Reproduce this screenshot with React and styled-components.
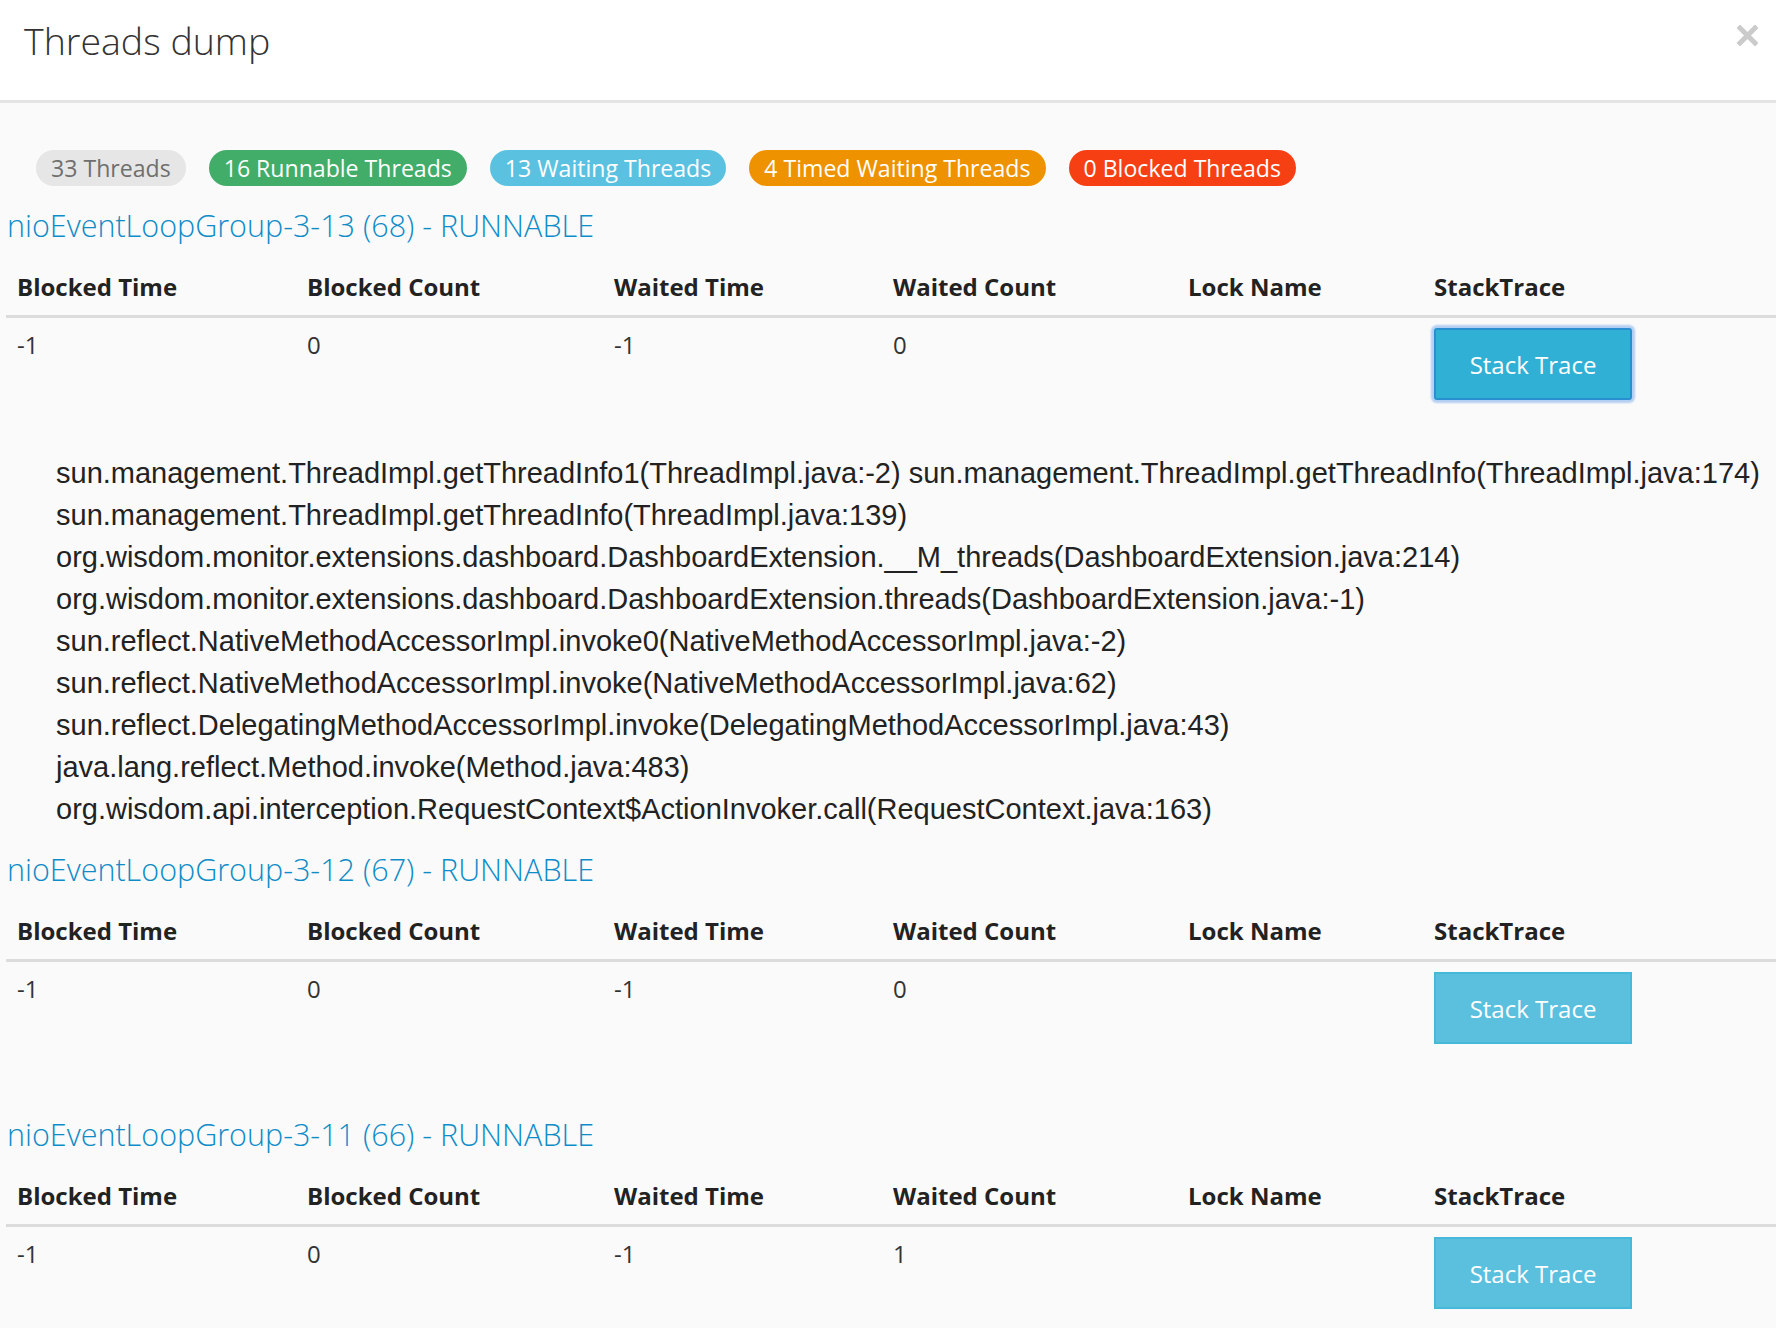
import React, { useState } from 'react'
import styled, { createGlobalStyle, css } from 'styled-components'

const GlobalStyle = createGlobalStyle`
  html, body {
    margin: 0;
    padding: 0;
    background: #fafafa;
    font-family: "Open Sans", "Liberation Sans", sans-serif;
    color: #333;
  }
  * { box-sizing: border-box; }
`

const Header = styled.div`
  height: 103px;
  background: #fff;
  border-bottom: 3px solid #e4e4e4;
  padding: 22px 18px 0 24px;
  display: flex;
  justify-content: space-between;
  align-items: flex-start;
`

const Title = styled.h1`
  margin: 0;
  font-size: 37.5px;
  font-weight: 300;
  line-height: 38px;
  color: #333;
`

const Close = styled.button`
  border: 0;
  background: none;
  padding: 0;
  margin-top: 3px;
  width: 21px;
  height: 21px;
  cursor: pointer;
  display: flex;
`

const Body = styled.div`
  padding: 47px 0 0 6px;
`

const Badges = styled.div`
  display: flex;
  gap: 23px;
  margin-left: 30px;
`

const badgeColors = {
  all: { bg: '#e6e6e6', fg: '#6f6f6f' },
  runnable: { bg: '#41ad69', fg: '#fff' },
  waiting: { bg: '#5bc1e1', fg: '#fff' },
  timed: { bg: '#ee9200', fg: '#fff' },
  blocked: { bg: '#f73f14', fg: '#fff' },
}

const Badge = styled.span`
  display: inline-block;
  height: 36px;
  line-height: 36px;
  padding: 0 15px;
  border-radius: 18px;
  font-size: 23.1px;
  background: ${(p) => badgeColors[p.$kind].bg};
  color: ${(p) => badgeColors[p.$kind].fg};
`

const ThreadName = styled.a`
  display: block;
  margin: 18px 0 12px 1px;
  font-size: 30.5px;
  font-weight: 300;
  line-height: 43px;
  color: #0e8cc8;
  text-decoration: none;
`

const Table = styled.table`
  width: 100%;
  border-collapse: collapse;
  table-layout: fixed;
  margin-bottom: ${(p) => (p.$open ? '42px' : '59px')};
`

const Th = styled.th`
  text-align: left;
  padding: 11px;
  font-size: 24px;
  line-height: 34px;
  font-weight: 700;
  color: #222;
  border-bottom: 3px solid #dcdcdc;
`

const Td = styled.td`
  padding: 10px 11px;
  font-size: 24px;
  line-height: 34px;
  color: #333;
  vertical-align: top;
`

const TraceButton = styled.button`
  width: 198px;
  height: 72px;
  border: 2px solid #46b8da;
  background: #5bc0de;
  color: #fff;
  font-family: "Open Sans", sans-serif;
  font-size: 24px;
  padding: 0;
  cursor: pointer;
  ${(p) =>
    p.$active &&
    css`
      background: #31b0d5;
      border-color: #2a8fd0;
      border-radius: 3px;
      box-shadow: 0 0 2px 3px rgba(120, 170, 235, 0.55);
    `}
`

const Trace = styled.div`
  padding-left: 50px;
  font-family: "Liberation Sans", Arial, sans-serif;
  font-size: 29px;
  line-height: 42px;
  color: #222;
`

const columns = ['Blocked Time', 'Blocked Count', 'Waited Time', 'Waited Count', 'Lock Name', 'StackTrace']
const widths = [290, 307, 279, 295, 246, 353]

const stack = [
  'sun.management.ThreadImpl.getThreadInfo1(ThreadImpl.java:-2)',
  'sun.management.ThreadImpl.getThreadInfo(ThreadImpl.java:174)',
  'sun.management.ThreadImpl.getThreadInfo(ThreadImpl.java:139)',
  'org.wisdom.monitor.extensions.dashboard.DashboardExtension.__M_threads(DashboardExtension.java:214)',
  'org.wisdom.monitor.extensions.dashboard.DashboardExtension.threads(DashboardExtension.java:-1)',
  'sun.reflect.NativeMethodAccessorImpl.invoke0(NativeMethodAccessorImpl.java:-2)',
  'sun.reflect.NativeMethodAccessorImpl.invoke(NativeMethodAccessorImpl.java:62)',
  'sun.reflect.DelegatingMethodAccessorImpl.invoke(DelegatingMethodAccessorImpl.java:43)',
  'java.lang.reflect.Method.invoke(Method.java:483)',
  'org.wisdom.api.interception.RequestContext$ActionInvoker.call(RequestContext.java:163)',
]

const threads = [
  { id: 68, name: 'nioEventLoopGroup-3-13', state: 'RUNNABLE', blockedTime: -1, blockedCount: 0, waitedTime: -1, waitedCount: 0, lock: '' },
  { id: 67, name: 'nioEventLoopGroup-3-12', state: 'RUNNABLE', blockedTime: -1, blockedCount: 0, waitedTime: -1, waitedCount: 0, lock: '' },
  { id: 66, name: 'nioEventLoopGroup-3-11', state: 'RUNNABLE', blockedTime: -1, blockedCount: 0, waitedTime: -1, waitedCount: 1, lock: '' },
]

function ThreadItem({ thread, open, onToggle }) {
  return (
    <section>
      <ThreadName href="#">
        {thread.name} ({thread.id}) - {thread.state}
      </ThreadName>
      <Table $open={open}>
        <colgroup>
          {widths.map((w, i) => (
            <col key={i} style={{ width: w }} />
          ))}
        </colgroup>
        <thead>
          <tr>
            {columns.map((c) => (
              <Th key={c}>{c}</Th>
            ))}
          </tr>
        </thead>
        <tbody>
          <tr>
            <Td>{thread.blockedTime}</Td>
            <Td>{thread.blockedCount}</Td>
            <Td>{thread.waitedTime}</Td>
            <Td>{thread.waitedCount}</Td>
            <Td>{thread.lock}</Td>
            <Td>
              <TraceButton $active={open} onClick={onToggle}>
                Stack Trace
              </TraceButton>
            </Td>
          </tr>
        </tbody>
      </Table>
      {open && <Trace>{stack.join(' ')}</Trace>}
    </section>
  )
}

export default function App() {
  const [openId, setOpenId] = useState(68)

  return (
    <>
      <GlobalStyle />
      <Header>
        <Title>Threads dump</Title>
        <Close aria-label="close">
          <svg width="21" height="21" viewBox="0 0 21 21">
            <path d="M3 3 L18 18 M18 3 L3 18" stroke="#cbcbcb" strokeWidth="5" strokeLinecap="square" />
          </svg>
        </Close>
      </Header>
      <Body>
        <Badges>
          <Badge $kind="all">33 Threads</Badge>
          <Badge $kind="runnable">16 Runnable Threads</Badge>
          <Badge $kind="waiting">13 Waiting Threads</Badge>
          <Badge $kind="timed">4 Timed Waiting Threads</Badge>
          <Badge $kind="blocked">0 Blocked Threads</Badge>
        </Badges>
        {threads.map((t) => (
          <ThreadItem
            key={t.id}
            thread={t}
            open={openId === t.id}
            onToggle={() => setOpenId(openId === t.id ? null : t.id)}
          />
        ))}
      </Body>
    </>
  )
}
